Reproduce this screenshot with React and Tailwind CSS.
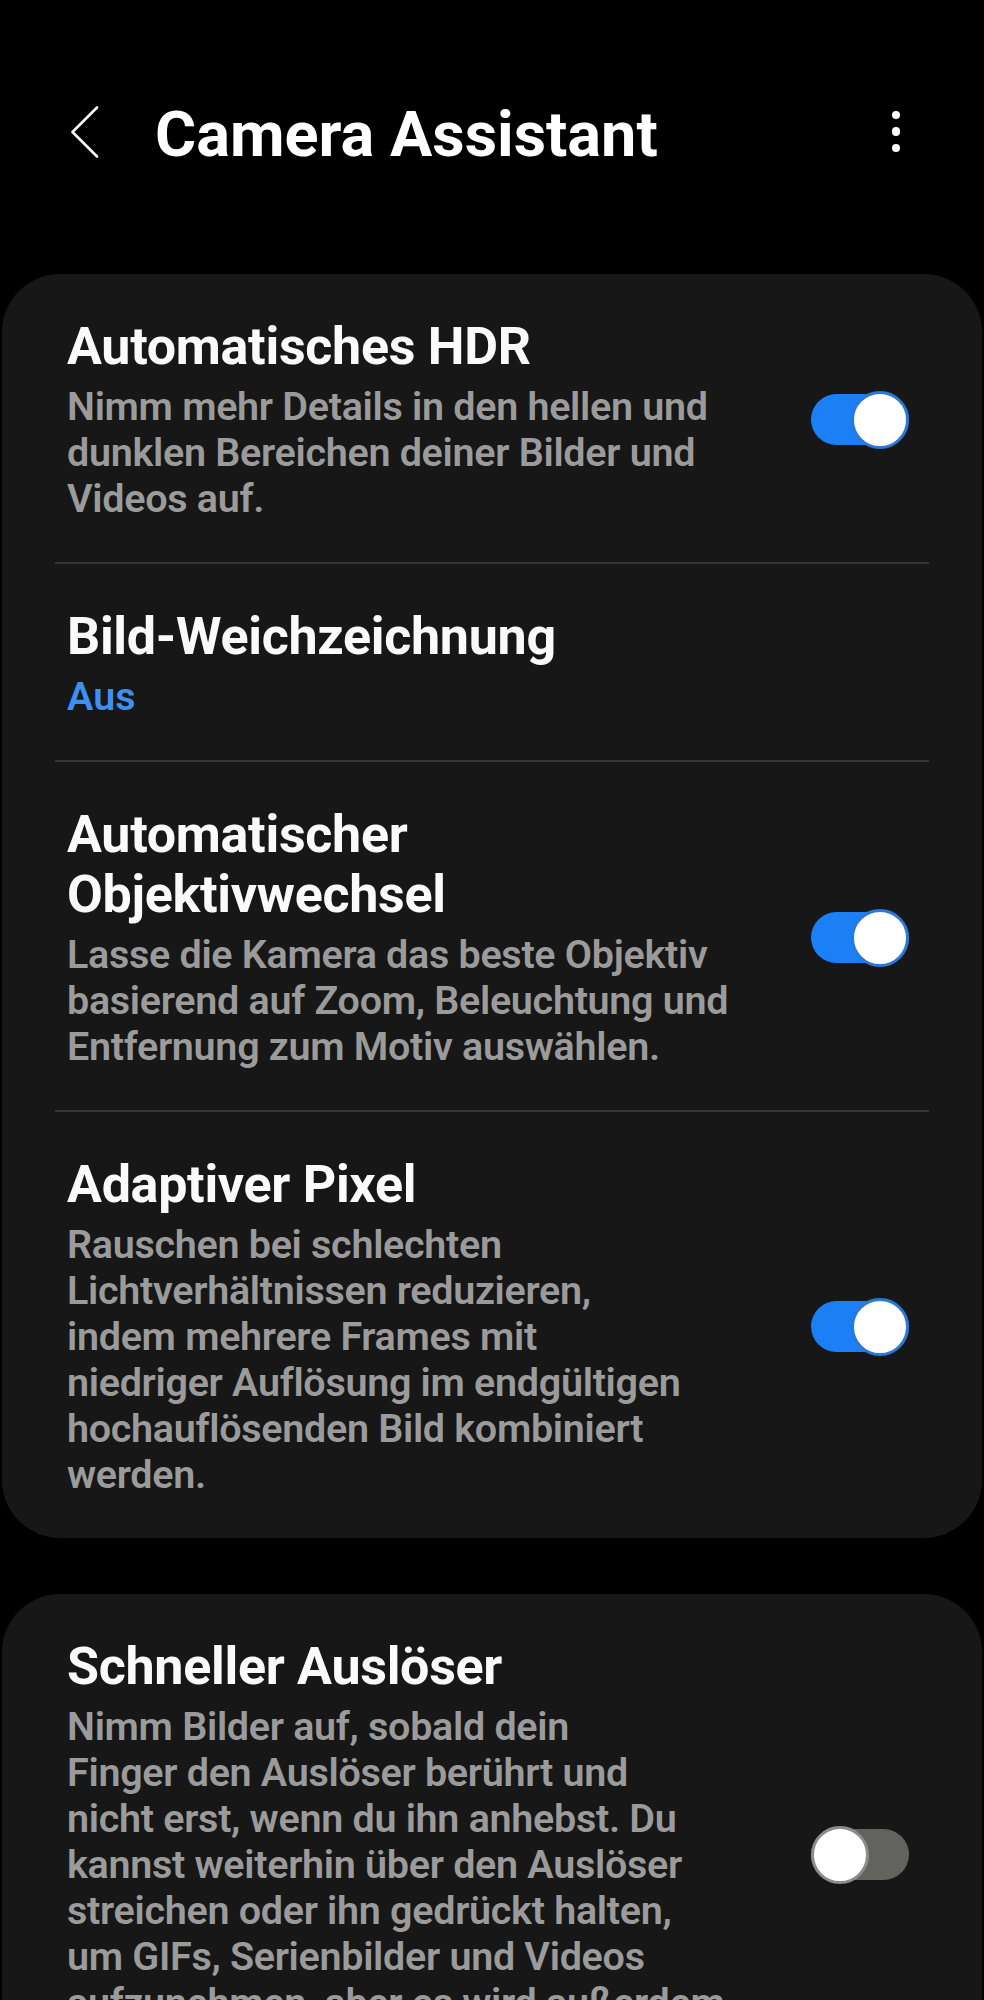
import React from "react";

function Toggle({ on }) {
  return (
    <div className="relative h-[58px] w-[98px] shrink-0">
      <div
        className={
          on
            ? "absolute left-0 right-0 top-[3.5px] h-[51px] rounded-full bg-[#1b7ff6]"
            : "absolute left-0 right-0 top-[3.5px] h-[51px] rounded-full bg-[#62625f]"
        }
      />
      <div
        className={
          on
            ? "absolute right-0 top-0 h-[58px] w-[58px] rounded-full border-[3px] border-[#2a78d8] bg-white"
            : "absolute left-0 top-0 h-[58px] w-[58px] rounded-full border-[3px] border-[#8c8c8c] bg-white"
        }
      />
    </div>
  );
}

function Item({ title, desc, blue, toggle }) {
  return (
    <div className="flex items-center pl-[65px] pr-[73px] pt-[43px] pb-[40px]">
      <div className="flex-1">
        <div className="text-[52px] leading-[60px] font-bold text-[#fafafa] tracking-[-0.3px]">
          {title.map((l, i) => (
            <div key={i} className="whitespace-nowrap">{l}</div>
          ))}
        </div>
        {desc && (
          <div className="mt-[7px] text-[39.5px] leading-[46px] font-semibold text-[#9b9b9b] tracking-[-0.3px]">
            {desc.map((l, i) => (
              <div key={i} className="whitespace-nowrap">{l}</div>
            ))}
          </div>
        )}
        {blue && (
          <div className="mt-[7px] text-[39.5px] leading-[46px] font-semibold text-[#3d8ff2]">
            {blue}
          </div>
        )}
      </div>
      {toggle !== undefined && <Toggle on={toggle} />}
    </div>
  );
}

function Divider() {
  return <div className="mx-[53px] h-[2px] bg-[#353535]" />;
}

export default function App() {
  return (
    <div
      className="min-h-screen bg-black pb-[40px]"
      style={{ fontFamily: "Roboto, 'Noto Sans', sans-serif" }}
    >
      <div className="flex h-[268px] items-center pl-[71px] pr-[84px]">
        <svg width="28" height="52" viewBox="0 0 28 52" className="mb-[5px] shrink-0">
          <polyline
            points="26,1.5 1.5,26 26,50.5"
            fill="none"
            stroke="#f5f5f5"
            strokeWidth="2.6"
            strokeLinecap="round"
            strokeLinejoin="round"
          />
        </svg>
        <div className="ml-[56px] text-[63px] leading-none font-bold text-white">
          Camera Assistant
        </div>
        <div className="ml-auto mb-[5px] flex flex-col items-center gap-[8px]">
          <div className="h-[8.5px] w-[8.5px] rounded-full bg-white" />
          <div className="h-[8.5px] w-[8.5px] rounded-full bg-white" />
          <div className="h-[8.5px] w-[8.5px] rounded-full bg-white" />
        </div>
      </div>

      <div className="mx-[2px] mt-[6px] rounded-[58px] bg-[#171717]">
        <Item
          title={["Automatisches HDR"]}
          desc={[
            "Nimm mehr Details in den hellen und",
            "dunklen Bereichen deiner Bilder und",
            "Videos auf.",
          ]}
          toggle={true}
        />
        <Divider />
        <Item title={["Bild-Weichzeichnung"]} blue="Aus" />
        <Divider />
        <Item
          title={["Automatischer", "Objektivwechsel"]}
          desc={[
            "Lasse die Kamera das beste Objektiv",
            "basierend auf Zoom, Beleuchtung und",
            "Entfernung zum Motiv auswählen.",
          ]}
          toggle={true}
        />
        <Divider />
        <Item
          title={["Adaptiver Pixel"]}
          desc={[
            "Rauschen bei schlechten",
            "Lichtverhältnissen reduzieren,",
            "indem mehrere Frames mit",
            "niedriger Auflösung im endgültigen",
            "hochauflösenden Bild kombiniert",
            "werden.",
          ]}
          toggle={true}
        />
      </div>

      <div className="mx-[2px] mt-[56px] rounded-[58px] bg-[#171717]">
        <Item
          title={["Schneller Auslöser"]}
          desc={[
            "Nimm Bilder auf, sobald dein",
            "Finger den Auslöser berührt und",
            "nicht erst, wenn du ihn anhebst. Du",
            "kannst weiterhin über den Auslöser",
            "streichen oder ihn gedrückt halten,",
            "um GIFs, Serienbilder und Videos",
            "aufzunehmen, aber es wird außerdem",
            "ein Auslöserton abgespielt.",
          ]}
          toggle={false}
        />
      </div>
    </div>
  );
}
